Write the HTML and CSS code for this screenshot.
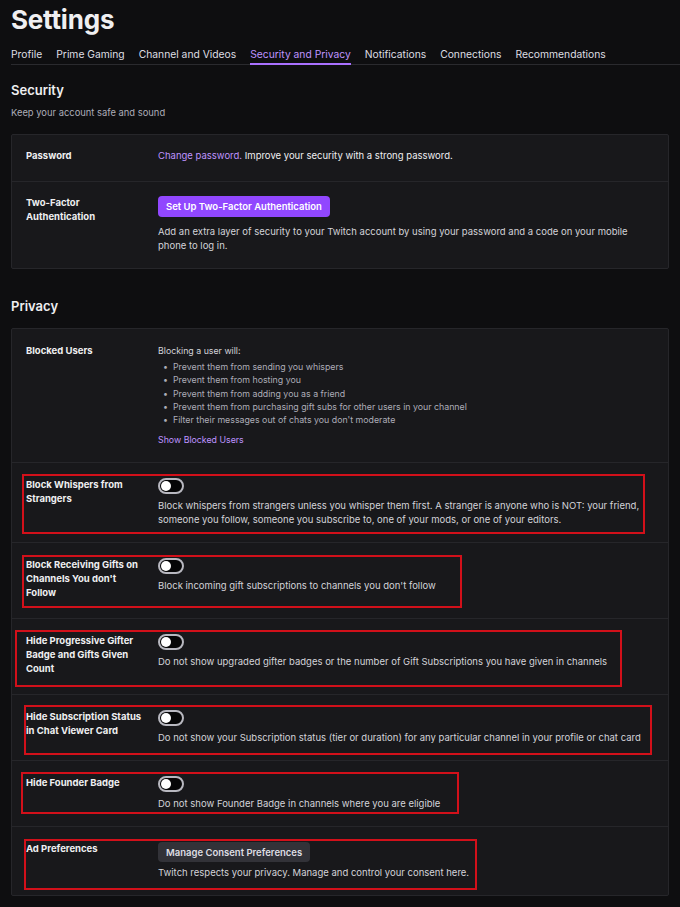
FILE: index.html
```html
<!DOCTYPE html>
<html>
    <head>
        <meta charset="utf-8"/>
        <title>Settings</title>
        <link rel="stylesheet" href="styles.css">
    </head>

    <body>
        <div id="page">
          <h1 class="title">Settings</h1>

          <nav class="tabs">
            <a href="#">Profile</a>
            <a href="#">Prime Gaming</a>
            <a href="#">Channel and Videos</a>
            <a href="#" class="active">Security and Privacy</a>
            <a href="#">Notifications</a>
            <a href="#">Connections</a>
            <a href="#">Recommendations</a>
          </nav>

          <section class="group">
            <h2>Security</h2>
            <p class="group-sub">Keep your account safe and sound</p>

            <div class="card card-security">
              <div class="row">
                <div class="row-label">Password</div>
                <div class="row-body">
                  <p><a href="#" class="link">Change password.</a> Improve your security with a strong password.</p>
                </div>
              </div>

              <div class="row">
                <div class="row-label">Two-Factor Authentication</div>
                <div class="row-body">
                  <button class="btn btn-primary">Set Up Two-Factor Authentication</button>
                  <p class="desc">Add an extra layer of security to your Twitch account by using your password and a code on your mobile phone to log in.</p>
                </div>
              </div>
            </div>
          </section>

          <section class="group">
            <h2 class="privacy-title">Privacy</h2>

            <div class="card">
              <div class="row">
                <div class="row-label">Blocked Users</div>
                <div class="row-body blocked">
                  <p class="desc">Blocking a user will:</p>
                  <ul class="bullets">
                    <li>Prevent them from sending you whispers</li>
                    <li>Prevent them from hosting you</li>
                    <li>Prevent them from adding you as a friend</li>
                    <li>Prevent them from purchasing gift subs for other users in your channel</li>
                    <li>Filter their messages out of chats you don't moderate</li>
                  </ul>
                  <a href="#" class="link show-blocked">Show Blocked Users</a>
                </div>
              </div>

              <div class="row">
                <div class="row-label">Block Whispers from Strangers</div>
                <div class="row-body">
                  <span class="toggle"></span>
                  <p class="desc">Block whispers from strangers unless you whisper them first. A stranger is anyone who is NOT: your friend, someone you follow, someone you subscribe to, one of your mods, or one of your editors.</p>
                </div>
                <div class="mark mark-whispers"></div>
              </div>

              <div class="row">
                <div class="row-label">Block Receiving Gifts on Channels You don't Follow</div>
                <div class="row-body">
                  <span class="toggle"></span>
                  <p class="desc">Block incoming gift subscriptions to channels you don't follow</p>
                </div>
                <div class="mark mark-gifts"></div>
              </div>

              <div class="row">
                <div class="row-label">Hide Progressive Gifter Badge and Gifts Given Count</div>
                <div class="row-body">
                  <span class="toggle"></span>
                  <p class="desc">Do not show upgraded gifter badges or the number of Gift Subscriptions you have given in channels</p>
                </div>
                <div class="mark mark-gifter"></div>
              </div>

              <div class="row">
                <div class="row-label">Hide Subscription Status in Chat Viewer Card</div>
                <div class="row-body">
                  <span class="toggle"></span>
                  <p class="desc">Do not show your Subscription status (tier or duration) for any particular channel in your profile or chat card</p>
                </div>
                <div class="mark mark-sub"></div>
              </div>

              <div class="row">
                <div class="row-label">Hide Founder Badge</div>
                <div class="row-body">
                  <span class="toggle"></span>
                  <p class="desc">Do not show Founder Badge in channels where you are eligible</p>
                </div>
                <div class="mark mark-founder"></div>
              </div>

              <div class="row">
                <div class="row-label">Ad Preferences</div>
                <div class="row-body">
                  <button class="btn btn-grey">Manage Consent Preferences</button>
                  <p class="desc">Twitch respects your privacy. Manage and control your consent here.</p>
                </div>
                <div class="mark mark-ads"></div>
              </div>
            </div>
          </section>
        </div>
    </body>
</html>
```

FILE: styles.css
```css
body {
  margin: 0;
  background: #0e0e10;
  color: #efeff1;
  font-family: Inter, "Noto Sans", Arial, sans-serif;
  font-size: 9.5px;
  line-height: 14px;
}

#page {
  padding: 3px 11px 20px 11px;
}

.title {
  margin: 0;
  font-size: 26px;
  line-height: 34px;
  font-weight: 700;
  letter-spacing: -0.2px;
}

/* tab strip */
.tabs {
  display: flex;
  gap: 14px;
  margin: 10px -11px 0 0;
  border-bottom: 1px solid #2a2a2e;
}

.tabs a {
  color: #dedee3;
  text-decoration: none;
  font-size: 10.3px;
  line-height: 14px;
  padding-bottom: 2px;
  border-bottom: 2px solid transparent;
  margin-bottom: -1px;
}

.tabs a.active {
  color: #bf94ff;
  border-bottom-color: #a970ff;
}

/* sections */
.group h2 {
  margin: 16px 0 7px 0;
  font-size: 13px;
  line-height: 18px;
  font-weight: 600;
}

.group h2.privacy-title {
  margin-top: 28px;
  margin-bottom: 13px;
}

.group-sub {
  margin: 0 0 14px 0;
  color: #adadb8;
  font-size: 9.4px;
}

.card {
  background: #18181b;
  border: 1px solid #26262a;
  border-radius: 2px;
}

.row {
  position: relative;
  display: grid;
  grid-template-columns: 132px 1fr;
  padding: 15px 15px 15px 14px;
  border-top: 1px solid #26262a;
}

.row:first-child {
  border-top: none;
}

.card-security .row {
  padding-top: 14px;
}

.row-label {
  font-weight: 700;
  padding: 0 12px 3px 0;
  color: #efeff1;
}

.row-body p {
  margin: 0;
}

.desc {
  color: #d3d3d9;
}

.link {
  color: #bf94ff;
  text-decoration: none;
}

/* blocked users text runs a size smaller */
.blocked {
  font-size: 8.8px;
}

.bullets {
  list-style: none;
  margin: 2px 0 0 0;
  padding: 0;
  color: #adadb8;
  line-height: 13.3px;
}

.bullets li::before {
  content: "•";
  display: inline-block;
  width: 10px;
  padding-left: 5px;
}

.show-blocked {
  display: block;
  margin-top: 7px;
}

/* controls */
.btn {
  display: block;
  border: none;
  border-radius: 4px;
  font-family: inherit;
  font-size: 9.5px;
  font-weight: 600;
  height: 21px;
  padding: 0 8px;
  margin-bottom: 8px;
}

.btn-primary {
  background: #9147ff;
  color: #fff;
}

.btn-grey {
  background: #323238;
  color: #dedee3;
  height: 20px;
  margin-bottom: 4px;
}

.toggle {
  position: relative;
  display: block;
  width: 26px;
  height: 16px;
  box-sizing: border-box;
  border: 2px solid #b8b8c0;
  border-radius: 8px;
  background: #060607;
  margin-bottom: 5px;
}

.toggle::after {
  content: "";
  position: absolute;
  left: 1px;
  top: 1px;
  width: 10px;
  height: 10px;
  border-radius: 50%;
  background: #fff;
}

/* red annotation boxes drawn over the rows */
.mark {
  position: absolute;
  box-sizing: border-box;
  border: 2px solid #d2101a;
  pointer-events: none;
}

.mark-whispers { left: 10px; top: 11px; width: 623px; height: 60px; }
.mark-gifts    { left: 10px; top: 12px; width: 440px; height: 53px; }
.mark-gifter   { left: 3px;  top: 11px; width: 607px; height: 57px; }
.mark-sub      { left: 12px; top: 10px; width: 628px; height: 50px; }
.mark-founder  { left: 9px;  top: 11px; width: 438px; height: 42px; }
.mark-ads      { left: 12px; top: 12px; width: 453px; height: 51px; }
```
